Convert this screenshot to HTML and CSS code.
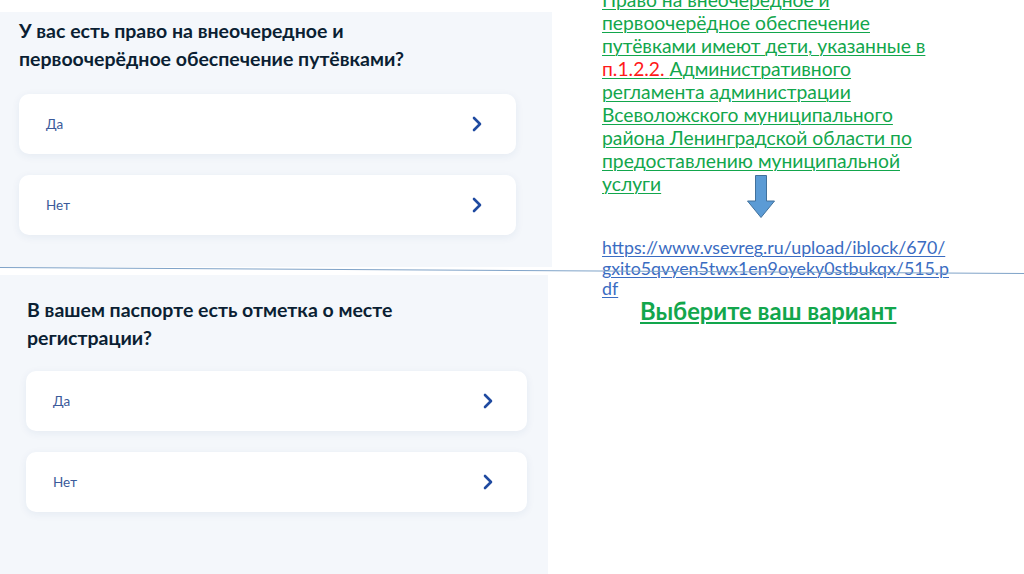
FILE: index.html
```html
<!DOCTYPE html>
<html lang="ru">
<head>
  <meta charset="UTF-8" />
  <meta name="viewport" content="width=device-width, initial-scale=1.0" />
  <title>Выберите ваш вариант</title>
  <link rel="stylesheet" href="styles.css">
</head>
<body>
  <div class="slide">
    <div class="shots">
      <div class="panel panel-first">
        <h2 class="question">У вас есть право на внеочередное и<br>первоочерёдное обеспечение путёвками?</h2>
        <div class="option">
          <span>Да</span>
          <svg class="chevron" viewBox="0 0 10 16"><path d="M2 2 L8 8 L2 14" /></svg>
        </div>
        <div class="option">
          <span>Нет</span>
          <svg class="chevron" viewBox="0 0 10 16"><path d="M2 2 L8 8 L2 14" /></svg>
        </div>
      </div>

      <div class="panel panel-second">
        <h2 class="question">В вашем паспорте есть отметка о месте<br>регистрации?</h2>
        <div class="option">
          <span>Да</span>
          <svg class="chevron" viewBox="0 0 10 16"><path d="M2 2 L8 8 L2 14" /></svg>
        </div>
        <div class="option">
          <span>Нет</span>
          <svg class="chevron" viewBox="0 0 10 16"><path d="M2 2 L8 8 L2 14" /></svg>
        </div>
      </div>
    </div>

    <div class="notes">
      <p class="rule">
        Право на внеочередное и<br>
        первоочерёдное обеспечение<br>
        путёвками имеют дети, указанные в<br>
        <span class="red">п.1.2.2. </span>Административного<br>
        регламента администрации<br>
        Всеволожского муниципального<br>
        района Ленинградской области по<br>
        предоставлению муниципальной<br>
        услуги
      </p>

      <svg class="down-arrow" viewBox="0 0 30 44">
        <path d="M9.5 0.5 H20.5 V26 H28.5 L15 42.5 L1.5 26 H9.5 Z" />
      </svg>

      <a class="doc-link" href="#">https://www.vsevreg.ru/upload/iblock/670/<br>gxito5qvyen5twx1en9oyeky0stbukqx/515.p<br>df</a>

      <p class="choose">Выберите ваш вариант</p>
    </div>

    <!-- connector line drawn across the slide -->
    <svg class="divider" viewBox="0 0 1024 574" preserveAspectRatio="none">
      <line x1="0" y1="267.5" x2="1024" y2="273.5" />
    </svg>
  </div>
</body>
</html>
```

FILE: styles.css
```css
body {
  margin: 0;
  background: #ffffff;
}
.slide {
  position: relative;
  width: 1024px;
  height: 574px;
  overflow: hidden;
  display: flex;
}
.shots {
  width: 552px;
  display: flex;
  flex-direction: column;
}
.panel {
  background: #f4f7fb;
  font-family: Lato, "Noto Sans", sans-serif;
}
.panel-first {
  margin-top: 12px;
  height: 250px;
  padding: 5px 36px 0 19px;
}
.panel-second {
  margin-top: 8px;
  margin-right: 4px;
  flex: 1;
  padding: 21px 21px 0 26px;
}
.question {
  margin: 0 0 21px;
  font-size: 19.5px;
  line-height: 28px;
  font-weight: 700;
  color: #0b1f33;
}
.panel-second .question {
  margin-bottom: 19px;
  padding-left: 1px;
}
.option {
  height: 60px;
  margin-bottom: 21px;
  padding: 0 34px 0 27px;
  background: #ffffff;
  border-radius: 10px;
  box-shadow: 0 2px 8px rgba(30, 70, 130, 0.07);
  display: flex;
  align-items: center;
  justify-content: space-between;
  font-size: 13.5px;
  color: #3b5a9a;
}
.chevron {
  width: 10px;
  height: 16px;
}
.chevron path {
  fill: none;
  stroke: #1f4aa0;
  stroke-width: 2.6;
  stroke-linecap: round;
  stroke-linejoin: round;
}
.notes {
  margin-left: 50px;
  font-family: Lato, "Noto Sans", sans-serif;
}
.rule {
  margin: -12px 0 0;
  font-size: 19.3px;
  line-height: 23px;
  color: #12a64c;
  text-decoration: underline;
  text-decoration-thickness: 1px;
  text-underline-offset: 2px;
}
.red {
  color: #ff1a1a;
}
.down-arrow {
  display: block;
  width: 30px;
  height: 44px;
  margin: -20px 0 0 144px;
}
.down-arrow path {
  fill: #5b9bd5;
  stroke: #41719c;
  stroke-width: 1;
}
.doc-link {
  display: block;
  margin-top: 18px;
  font-size: 17.8px;
  line-height: 20.5px;
  color: #3a6cc2;
  text-decoration-thickness: 1px;
  text-underline-offset: 2px;
}
.choose {
  margin: -3px 0 0 38px;
  font-size: 23.8px;
  line-height: 30px;
  font-weight: 700;
  color: #12a64c;
  text-decoration: underline;
  text-decoration-thickness: 2px;
  text-underline-offset: 2px;
}
.divider {
  position: absolute;
  left: 0;
  top: 0;
  width: 1024px;
  height: 574px;
  pointer-events: none;
}
.divider line {
  stroke: #7fa3c8;
  stroke-width: 1;
}
```
